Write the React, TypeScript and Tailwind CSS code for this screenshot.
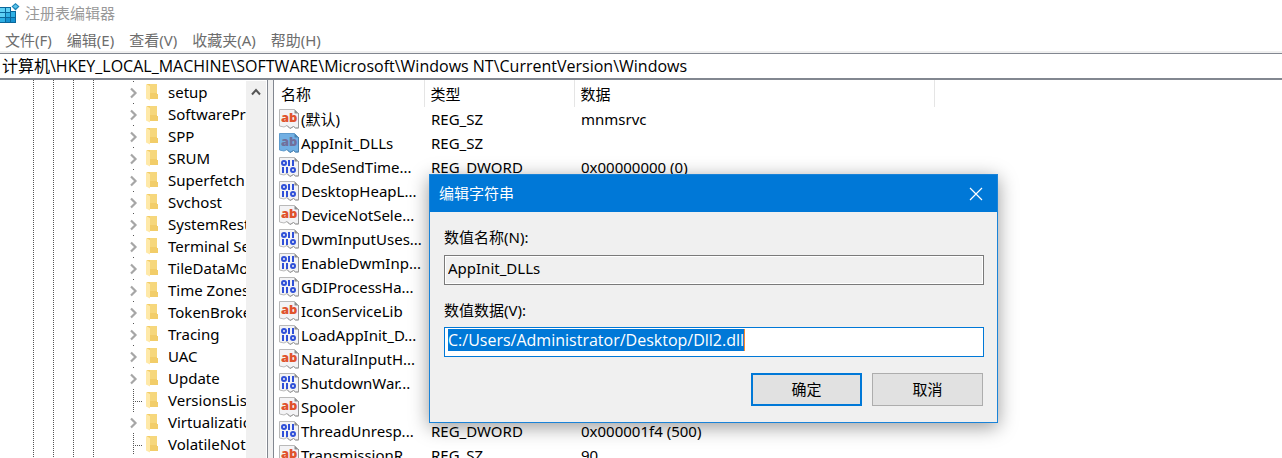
import { useEffect, useRef } from 'react';

type ValueKind = 'REG_SZ' | 'REG_DWORD';

interface RegistryValue {
  name: string;
  kind: ValueKind;
  data: string;
  selected?: boolean;
}

const menus = ['文件(F)', '编辑(E)', '查看(V)', '收藏夹(A)', '帮助(H)'];

const keys: { name: string; leaf?: boolean }[] = [
  { name: 'setup' },
  { name: 'SoftwareProtectionPlatform' },
  { name: 'SPP' },
  { name: 'SRUM' },
  { name: 'Superfetch' },
  { name: 'Svchost' },
  { name: 'SystemRestore' },
  { name: 'Terminal Server' },
  { name: 'TileDataModel' },
  { name: 'Time Zones' },
  { name: 'TokenBroker' },
  { name: 'Tracing' },
  { name: 'UAC' },
  { name: 'Update' },
  { name: 'VersionsList', leaf: true },
  { name: 'Virtualization' },
  { name: 'VolatileNotifications', leaf: true },
];

const values: RegistryValue[] = [
  { name: '(默认)', kind: 'REG_SZ', data: 'mnmsrvc' },
  { name: 'AppInit_DLLs', kind: 'REG_SZ', data: '', selected: true },
  { name: 'DdeSendTime...', kind: 'REG_DWORD', data: '0x00000000 (0)' },
  { name: 'DesktopHeapL...', kind: 'REG_DWORD', data: '' },
  { name: 'DeviceNotSele...', kind: 'REG_SZ', data: '' },
  { name: 'DwmInputUses...', kind: 'REG_DWORD', data: '' },
  { name: 'EnableDwmInp...', kind: 'REG_DWORD', data: '' },
  { name: 'GDIProcessHa...', kind: 'REG_DWORD', data: '' },
  { name: 'IconServiceLib', kind: 'REG_SZ', data: '' },
  { name: 'LoadAppInit_D...', kind: 'REG_DWORD', data: '' },
  { name: 'NaturalInputH...', kind: 'REG_SZ', data: '' },
  { name: 'ShutdownWar...', kind: 'REG_DWORD', data: '' },
  { name: 'Spooler', kind: 'REG_SZ', data: '' },
  { name: 'ThreadUnresp...', kind: 'REG_DWORD', data: '0x000001f4 (500)' },
  { name: 'TransmissionR...', kind: 'REG_SZ', data: '90' },
];

function RegistryIcon() {
  return (
    <svg width="20" height="20" viewBox="0 0 20 20" className="shrink-0" aria-hidden="true">
      <path d="M0 4h11v4h5v12H0z" fill="#0a679b" />
      <path d="M0 5h5v4H0zM6 5h4v4H6zM0 10h5v4H0z" fill="#5fd0f4" />
      <path d="M6 10h4v4H6zM0 15h5v4H0zM11 9h4v5h-4z" fill="#2fb0e4" />
      <path d="M6 15h4v4H6zM11 15h4v4h-4z" fill="#1592d0" />
      <path d="M15.500 0l4 3.500-4 4-4-4z" fill="#1b84b8" />
      <path d="M15.500 1.500l2.500 2-2.500 2-2.500-2z" fill="#5cc4ea" />
    </svg>
  );
}

function FolderIcon() {
  return (
    <svg width="12" height="18" viewBox="0 0 12 18" className="shrink-0" aria-hidden="true">
      <path d="M1 1h10v10h1v5H2z" fill="#f2cd69" />
      <path d="M4 1h7v9H4z" fill="#f6d77c" />
      <path d="M0 1l4 2v14.500l-4-2z" fill="#ffe9a8" />
    </svg>
  );
}

function BranchIcon({ leaf }: { leaf?: boolean }) {
  return (
    <svg width="17" height="22" viewBox="0 0 17 22" className="shrink-0" aria-hidden="true">
      {leaf ? (
        <path d="M4.500 0v22M6 12.500h7" stroke="#555" strokeDasharray="1 1" fill="none" />
      ) : (
        <>
          <path d="M4.500 0v1" stroke="#555" />
          <path d="M2 7.500l4.500 4.500L2 16.500" stroke="#a6a6a6" strokeWidth="2.200" fill="none" />
        </>
      )}
    </svg>
  );
}

function ValueIcon({ kind, selected }: { kind: ValueKind; selected?: boolean }) {
  return (
    <svg width="20" height="20" viewBox="0 0 20 20" className="shrink-0" aria-hidden="true">
      <path
        d="M.5.5h15l4 4v14.500h-3l-2-1.500-3.500 2-3-3-3 1.500-4.500-1z"
        fill={selected ? '#72b0e4' : '#f3f3f5'}
        stroke={selected ? '#5f9bcd' : '#b9b9b9'}
      />
      <path
        d="M19.500 4v15h-3l-2-1.500-3.500 2-3-3"
        fill="none"
        stroke={selected ? '#4b82b0' : '#9a9a9a'}
      />
      <path d="M15.500.5v4h4z" fill={selected ? '#4b82b0' : '#8e8e8e'} />
      {kind === 'REG_SZ' ? (
        <text
          x="2"
          y="13"
          fontFamily="Open Sans, sans-serif"
          fontSize="13"
          fontWeight="800"
          fill={selected ? '#716f9b' : '#e0522d'}
        >
          ab
        </text>
      ) : (
        <g fill="none" stroke="#2f50d8" strokeWidth="2">
          <circle cx="5" cy="6" r="2" />
          <path d="M10 3v6M14 3v6M4 10v6M8 10v6" />
          <circle cx="14" cy="13" r="2" />
        </g>
      )}
    </svg>
  );
}

function KeyTree() {
  return (
    <div className="flex w-[268px] shrink-0 border-r border-[#828790] bg-white">
      <div className="flex min-w-0 flex-1 overflow-hidden">
        <svg className="h-full w-[129px] shrink-0" aria-hidden="true">
          <path
            d="M33.500 0V900M53.500 0V900M73.500 0V900M93.500 0V900"
            stroke="#555"
            strokeDasharray="1 1"
          />
        </svg>
        <ul className="min-w-0 flex-1 pt-px">
          {keys.map((key) => (
            <li key={key.name} className="flex h-[22px] items-center whitespace-nowrap">
              <BranchIcon leaf={key.leaf} />
              <FolderIcon />
              <span className="pl-[10px]">{key.name}</span>
            </li>
          ))}
        </ul>
      </div>
      <div className="mt-px w-[21px] shrink-0 border-r border-white bg-[#f0f0f0]">
        <button type="button" aria-label="向上滚动" className="flex h-[22px] w-full items-center justify-center">
          <svg width="10" height="8" viewBox="0 0 10 8" aria-hidden="true">
            <path d="M1 6.500l4-4.500 4 4.500" stroke="#555" strokeWidth="2" fill="none" />
          </svg>
        </button>
      </div>
    </div>
  );
}

function ValueList() {
  return (
    <div className="min-w-0 flex-1 overflow-hidden border-l border-[#828790] bg-white">
      <table className="w-[660px] table-fixed border-collapse whitespace-nowrap text-left">
        <colgroup>
          <col className="w-[150px]" />
          <col className="w-[150px]" />
          <col className="w-[360px]" />
        </colgroup>
        <thead>
          <tr className="h-[27px]">
            {['名称', '类型', '数据'].map((title) => (
              <th key={title} className="border-r border-[#e5e5e5] py-0 pl-[6px] font-normal first:pl-[7px]">
                {title}
              </th>
            ))}
          </tr>
        </thead>
        <tbody>
          {values.map((value) => (
            <tr key={value.name} className="h-6">
              <td className="p-0">
                <div className="flex items-center gap-[2px] pl-[5px]">
                  <ValueIcon kind={value.kind} selected={value.selected} />
                  <span>{value.name}</span>
                </div>
              </td>
              <td className="py-0 pl-[7px]">{value.kind}</td>
              <td className="py-0 pl-[7px]">{value.data}</td>
            </tr>
          ))}
        </tbody>
      </table>
    </div>
  );
}

function EditStringDialog() {
  const dataRef = useRef<HTMLInputElement>(null);

  useEffect(() => {
    dataRef.current?.focus();
    dataRef.current?.select();
  }, []);

  return (
    <div
      role="dialog"
      aria-labelledby="dialog-title"
      className="absolute left-[429px] top-[174px] w-[569px] border border-[#1a83d8] bg-[#f0f0f0] shadow-[0_4px_18px_rgba(0,0,0,0.4)]"
    >
      <div className="flex h-[37px] items-center justify-between bg-[#0078d7] pl-[9px] pr-[14px] text-white">
        <h2 id="dialog-title" className="pb-[2px]">
          编辑字符串
        </h2>
        <button type="button" aria-label="关闭">
          <svg width="14" height="14" viewBox="0 0 14 14" aria-hidden="true">
            <path d="M1 1l12 12M13 1L1 13" stroke="#fff" strokeWidth="1.200" />
          </svg>
        </button>
      </div>
      <form className="pb-4 pl-[14px] pr-[13px] pt-[14px]" onSubmit={(event) => event.preventDefault()}>
        <label htmlFor="value-name" className="block">
          数值名称(N):
        </label>
        <input
          id="value-name"
          readOnly
          value="AppInit_DLLs"
          className="mt-[7px] block h-[30px] w-full border border-[#7a7a7a] bg-[#f0f0f0] pb-1 pl-[3px] shadow-[inset_0_0_0_1px_#fff] outline-none"
        />
        <label htmlFor="value-data" className="mt-[14px] block">
          数值数据(V):
        </label>
        <div className="relative mt-[6px]">
          <input
            id="value-data"
            ref={dataRef}
            defaultValue="C:/Users/Administrator/Desktop/Dll2.dll"
            className="block h-[30px] w-full border border-[#0078d7] bg-white pb-1 pl-[3px] font-['Open_Sans','Noto_Sans_CJK_SC',sans-serif] text-base leading-[20px] outline-none selection:bg-[#0078d7] selection:text-white"
          />
          <span className="absolute left-[300px] top-[2px] h-[22px] w-px bg-[#ff8728]" />
        </div>
        <div className="mt-4 flex justify-end gap-[10px] pr-px">
          <button type="submit" className="h-[33px] w-[111px] border-2 border-[#0078d7] bg-[#e1e1e1] pb-[2px]">
            确定
          </button>
          <button type="button" className="h-[33px] w-[111px] border border-[#adadad] bg-[#e1e1e1] pb-[2px]">
            取消
          </button>
        </div>
      </form>
    </div>
  );
}

export default function App() {
  return (
    <div className="relative flex h-screen flex-col overflow-hidden bg-white font-['Noto_Sans','Noto_Sans_CJK_SC',sans-serif] text-[15px] leading-[22px] text-black">
      <header className="flex h-7 shrink-0 items-center gap-[5px] pb-[2px] text-[#999]">
        <RegistryIcon />
        <h1>注册表编辑器</h1>
      </header>
      <nav className="flex h-[23px] shrink-0 items-center gap-[15px] pl-[5px] text-[#6d6d6d]">
        {menus.map((menu) => (
          <button key={menu} type="button">
            {menu}
          </button>
        ))}
      </nav>
      <div className="shrink-0 bg-[#f0f0f0] pt-[2px]">
        <input
          aria-label="地址"
          defaultValue="计算机\HKEY_LOCAL_MACHINE\SOFTWARE\Microsoft\Windows NT\CurrentVersion\Windows"
          className="block h-[27px] w-full border-b-2 border-t border-[#828790] bg-white pb-[2px] pl-[2px] font-['Open_Sans','Noto_Sans_CJK_SC',sans-serif] text-base outline-none"
        />
      </div>
      <main className="flex min-h-0 flex-1 gap-[5px] bg-[#f0f0f0]">
        <KeyTree />
        <ValueList />
      </main>
      <EditStringDialog />
    </div>
  );
}
